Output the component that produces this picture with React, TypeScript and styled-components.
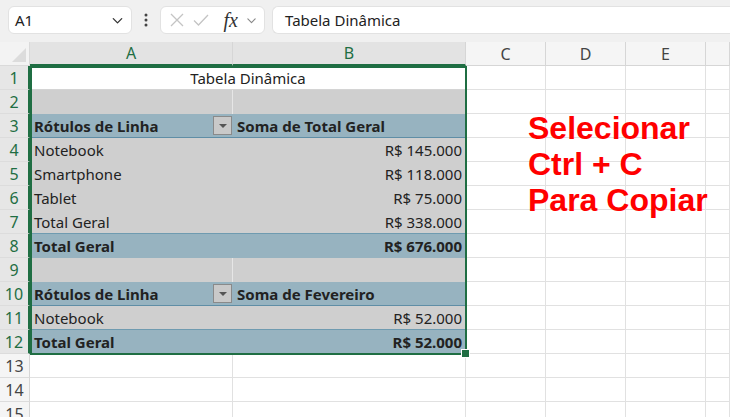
import React from "react";
import styled, { createGlobalStyle, css } from "styled-components";

const GlobalStyle = createGlobalStyle`
  html, body {
    margin: 0;
    padding: 0;
    background: #ffffff;
    overflow: hidden;
  }
  body {
    font-family: "Noto Sans", "Open Sans", sans-serif;
    color: #222;
  }
`;

const GREEN = "#1f6e43";

const Page = styled.div`
  width: 730px;
  height: 417px;
  overflow: hidden;
  display: flex;
  flex-direction: column;
`;

const Toolbar = styled.div`
  height: 42px;
  flex-shrink: 0;
  box-sizing: border-box;
  background: #f0f0f0;
  display: flex;
  align-items: flex-start;
  padding: 6px 0 0 8px;
`;

const Box = styled.div`
  height: 28px;
  box-sizing: border-box;
  background: #ffffff;
  border: 1px solid #e2e2e2;
  border-radius: 6px;
  display: flex;
  align-items: center;
`;

const NameBox = styled(Box)`
  width: 124px;
  padding: 0 6px 0 6px;
  justify-content: space-between;
  font-size: 15px;
  color: #222;
`;

const Dots = styled.div`
  width: 28px;
  height: 28px;
  display: flex;
  align-items: center;
  justify-content: center;
`;

const FxBox = styled(Box)`
  width: 105px;
  padding: 0 6px 0 8px;
  justify-content: space-between;
`;

const Fx = styled.span`
  font-family: "Liberation Serif", serif;
  font-style: italic;
  font-size: 20px;
  color: #333;
  margin-left: 6px;
`;

const FormulaBar = styled(Box)`
  flex: 1;
  margin-left: 7px;
  border-right: none;
  border-radius: 6px 0 0 6px;
  padding-left: 12px;
  font-size: 15px;
  color: #222;
`;

const SheetArea = styled.div`
  position: relative;
  flex: 1;
  min-height: 0;
`;

const Grid = styled.div`
  display: grid;
  grid-template-columns: 30px 203px 233px 80px 80px 80px 1fr;
  grid-auto-rows: 24px;
`;

const Corner = styled.div`
  background: #f3f3f3;
  border-right: 1px solid #dadada;
  border-bottom: 1px solid #dadada;
  box-sizing: border-box;
  display: flex;
  align-items: flex-end;
  justify-content: flex-end;
  padding: 0 3px 3px 0;
`;

const ColHead = styled.div<{ $active?: boolean }>`
  box-sizing: border-box;
  display: flex;
  align-items: center;
  justify-content: center;
  font-size: 16px;
  border-right: 1px solid #d6d6d6;
  ${(p) =>
    p.$active
      ? css`
          background: #e3e3e3;
          color: ${GREEN};
          border-bottom: 2px solid ${GREEN};
        `
      : css`
          background: #f5f5f5;
          color: #444;
          border-bottom: 1px solid #d6d6d6;
        `}
`;

const RowHead = styled.div<{ $active?: boolean }>`
  box-sizing: border-box;
  display: flex;
  align-items: center;
  justify-content: center;
  font-size: 16px;
  border-bottom: 1px solid #dcdcdc;
  ${(p) =>
    p.$active
      ? css`
          background: #e6e6e6;
          color: ${GREEN};
          border-right: 2px solid ${GREEN};
        `
      : css`
          background: #f5f5f5;
          color: #444;
          border-right: 1px solid #d6d6d6;
        `}
`;

type Kind = "plain" | "title" | "blank" | "header" | "item" | "total";

const Cell = styled.div<{ $kind?: Kind; $span?: number; $right?: boolean; $divider?: boolean }>`
  box-sizing: border-box;
  display: flex;
  align-items: center;
  padding: 0 4px;
  font-size: 15px;
  white-space: nowrap;
  overflow: hidden;
  grid-column: span ${(p) => p.$span ?? 1};
  justify-content: ${(p) => (p.$right ? "flex-end" : "flex-start")};
  ${(p) => {
    switch (p.$kind) {
      case "title":
        return css`
          background: #ffffff;
          justify-content: center;
          border-bottom: 1px solid #d4d4d4;
        `;
      case "blank":
        return css`
          background: #cfcfcf;
          border-right: ${p.$divider ? "1px solid #e6e6e6" : "none"};
        `;
      case "header":
        return css`
          background: #97b3c0;
          font-weight: 700;
          border-bottom: 1px solid #5f8ea6;
        `;
      case "item":
        return css`
          background: #cfcfcf;
        `;
      case "total":
        return css`
          background: #97b3c0;
          font-weight: 700;
        `;
      default:
        return css`
          background: #ffffff;
          border-right: 1px solid #e1e1e1;
          border-bottom: 1px solid #e1e1e1;
        `;
    }
  }}
`;

const ItemRowCell = styled(Cell)<{ $line?: boolean }>`
  border-bottom: ${(p) => (p.$line ? "1px solid #6f9bb0" : "none")};
`;

const FilterButton = styled.div`
  width: 19px;
  height: 19px;
  box-sizing: border-box;
  margin-left: auto;
  margin-right: -3px;
  border: 1px solid #8a8a8a;
  background: #c9c9c9;
  display: flex;
  align-items: center;
  justify-content: center;
  &::after {
    content: "";
    border-left: 4px solid transparent;
    border-right: 4px solid transparent;
    border-top: 4px solid #555;
  }
`;

const Selection = styled.div`
  position: absolute;
  left: 30px;
  top: 24px;
  width: 437px;
  height: 289px;
  box-sizing: border-box;
  border: 2px solid ${GREEN};
  pointer-events: none;
`;

const Handle = styled.div`
  position: absolute;
  right: -5px;
  bottom: -5px;
  width: 7px;
  height: 7px;
  background: ${GREEN};
  border: 1px solid #fff;
`;

const Note = styled.div`
  position: absolute;
  left: 528px;
  top: 68px;
  font-family: "Liberation Sans", Arial, sans-serif;
  font-weight: 700;
  font-size: 32px;
  line-height: 36px;
  color: #ff0000;
`;

const blankTail = (n: number) =>
  Array.from({ length: n }, (_, i) => <Cell key={`t${i}`} $kind="plain" />);

const Chevron = ({ size = 14, color = "#444" }: { size?: number; color?: string }) => (
  <svg width={size} height={size} viewBox="0 0 16 16" fill="none">
    <path d="M3.5 6l4.5 4.5L12.5 6" stroke={color} strokeWidth="1.4" strokeLinecap="round" strokeLinejoin="round" />
  </svg>
);

type Row =
  | { kind: "title"; text: string }
  | { kind: "blank" }
  | { kind: "header"; a: string; b: string }
  | { kind: "item"; a: string; b: string; line?: boolean }
  | { kind: "total"; a: string; b: string };

const rows: Row[] = [
  { kind: "title", text: "Tabela Dinâmica" },
  { kind: "blank" },
  { kind: "header", a: "Rótulos de Linha", b: "Soma de Total Geral" },
  { kind: "item", a: "Notebook", b: "R$ 145.000" },
  { kind: "item", a: "Smartphone", b: "R$ 118.000" },
  { kind: "item", a: "Tablet", b: "R$ 75.000" },
  { kind: "item", a: "Total Geral", b: "R$ 338.000", line: true },
  { kind: "total", a: "Total Geral", b: "R$ 676.000" },
  { kind: "blank" },
  { kind: "header", a: "Rótulos de Linha", b: "Soma de Fevereiro" },
  { kind: "item", a: "Notebook", b: "R$ 52.000", line: true },
  { kind: "total", a: "Total Geral", b: "R$ 52.000" },
];

function renderPivot(row: Row) {
  switch (row.kind) {
    case "title":
      return <Cell $kind="title" $span={2}>{row.text}</Cell>;
    case "blank":
      return (
        <>
          <Cell $kind="blank" $divider />
          <Cell $kind="blank" />
        </>
      );
    case "header":
      return (
        <>
          <Cell $kind="header">
            {row.a}
            <FilterButton />
          </Cell>
          <Cell $kind="header">{row.b}</Cell>
        </>
      );
    case "item":
      return (
        <>
          <ItemRowCell $kind="item" $line={row.line}>{row.a}</ItemRowCell>
          <ItemRowCell $kind="item" $line={row.line} $right>{row.b}</ItemRowCell>
        </>
      );
    case "total":
      return (
        <>
          <Cell $kind="total">{row.a}</Cell>
          <Cell $kind="total" $right>{row.b}</Cell>
        </>
      );
  }
}

export default function App() {
  return (
    <Page>
      <GlobalStyle />
      <Toolbar>
        <NameBox>
          <span>A1</span>
          <Chevron size={15} color="#333" />
        </NameBox>
        <Dots>
          <svg width="4" height="16" viewBox="0 0 4 16">
            <circle cx="2" cy="3" r="1.5" fill="#444" />
            <circle cx="2" cy="8" r="1.5" fill="#444" />
            <circle cx="2" cy="13" r="1.5" fill="#444" />
          </svg>
        </Dots>
        <FxBox>
          <svg width="16" height="16" viewBox="0 0 16 16">
            <path d="M2 2l12 12M14 2L2 14" stroke="#c4c4c4" strokeWidth="1.3" />
          </svg>
          <svg width="18" height="16" viewBox="0 0 18 16">
            <path d="M2 8.5l4.5 4.5L16 3" stroke="#c4c4c4" strokeWidth="1.3" fill="none" />
          </svg>
          <Fx>fx</Fx>
          <Chevron size={13} color="#888" />
        </FxBox>
        <FormulaBar>Tabela Dinâmica</FormulaBar>
      </Toolbar>
      <SheetArea>
        <Grid>
          <Corner>
            <svg width="14" height="14" viewBox="0 0 14 14">
              <path d="M14 0V14H0Z" fill="#dcdcdc" />
            </svg>
          </Corner>
          {["A", "B", "C", "D", "E", ""].map((c, i) => (
            <ColHead key={c || "f"} $active={i < 2}>{c}</ColHead>
          ))}
          {rows.map((row, i) => (
            <React.Fragment key={i}>
              <RowHead $active>{i + 1}</RowHead>
              {renderPivot(row)}
              {blankTail(4)}
            </React.Fragment>
          ))}
          {[13, 14, 15].map((n) => (
            <React.Fragment key={n}>
              <RowHead>{n}</RowHead>
              {blankTail(6)}
            </React.Fragment>
          ))}
        </Grid>
        <Selection>
          <Handle />
        </Selection>
        <Note>
          Selecionar
          <br />
          Ctrl + C
          <br />
          Para Copiar
        </Note>
      </SheetArea>
    </Page>
  );
}
